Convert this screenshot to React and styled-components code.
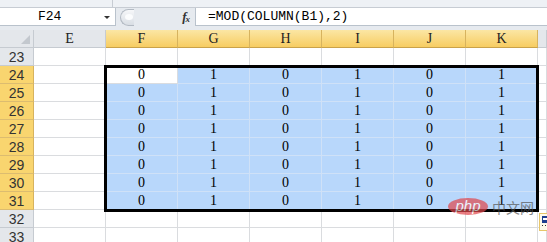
import React from 'react';
import styled, { createGlobalStyle } from 'styled-components';

const GlobalStyle = createGlobalStyle`
  html, body { margin: 0; padding: 0; background: #ffffff; }
  body { font-family: "Liberation Mono", monospace; }
`;

const COLS = ['E', 'F', 'G', 'H', 'I', 'J', 'K', ''];
const ROWS = [23, 24, 25, 26, 27, 28, 29, 30, 31, 32, 33];
const SEL_COLS = ['F', 'G', 'H', 'I', 'J', 'K'];
const isSelRow = r => r >= 24 && r <= 31;

const Window = styled.div`
  position: relative;
  width: 547px;
  height: 242px;
  overflow: hidden;
  background: #ffffff;
`;

const TopStrip = styled.div`
  display: flex;
  height: 7px;
  background: #eef1f5;
  border-bottom: 1px solid #c7ccd3;
`;

const StripCell = styled.div`
  width: ${p => p.w || 'auto'};
  flex: ${p => (p.w ? 'none' : 1)};
  border-right: ${p => (p.w ? '1px solid #c7ccd3' : 'none')};
`;

const FormulaBar = styled.div`
  display: flex;
  height: 22px;
  background: #e6eaef;
`;

const NameBox = styled.div`
  position: relative;
  width: 116px;
  height: 18px;
  box-sizing: border-box;
  background: #ffffff;
  border-right: 1px solid #b9c2cc;
  border-bottom: 1px solid #b9c2cc;
  font-size: 13px;
  line-height: 18px;
  padding-left: 38px;
  color: #000;
`;

const DropArrow = styled.span`
  position: absolute;
  right: 5px;
  top: 8px;
  width: 0;
  height: 0;
  border-left: 3px solid transparent;
  border-right: 3px solid transparent;
  border-top: 3px solid #333;
`;

const Tools = styled.div`
  width: 79px;
  height: 18px;
  display: flex;
  align-items: center;
  justify-content: space-between;
  padding: 0 4px;
  box-sizing: border-box;
`;

const Grip = styled.div`
  width: 14px;
  height: 17px;
  box-sizing: border-box;
  border: 1px solid #b3bac3;
  border-right: none;
  border-radius: 9px 0 0 9px;
  background: linear-gradient(#f6f7f9, #d9dee4);
  position: relative;
  &::after {
    content: '';
    position: absolute;
    left: 4px;
    top: 4px;
    width: 8px;
    height: 6px;
    border-radius: 50%;
    background: #fbfcfd;
  }
`;

const Fx = styled.span`
  font-family: "Liberation Serif", serif;
  font-style: italic;
  font-weight: bold;
  font-size: 13px;
  color: #333;
  letter-spacing: -1px;
  padding-right: 2px;
  sub {
    font-size: 9px;
    vertical-align: -1px;
  }
`;

const FormulaInput = styled.div`
  flex: 1;
  height: 18px;
  box-sizing: border-box;
  background: #ffffff;
  border-left: 1px solid #b9c2cc;
  border-bottom: 1px solid #b9c2cc;
  font-size: 13px;
  line-height: 18px;
  padding-left: 12px;
  white-space: nowrap;
`;

const Sheet = styled.div`
  display: grid;
  grid-template-columns: 34px repeat(7, 72px) 1fr;
  grid-auto-rows: 18px;
`;

const Corner = styled.div`
  position: relative;
  box-sizing: border-box;
  background: #e4e7eb;
  border-right: 1px solid #c6cbd1;
  border-bottom: 1px solid #c6cbd1;
  &::after {
    content: '';
    position: absolute;
    right: 3px;
    bottom: 3px;
    border-left: 9px solid transparent;
    border-bottom: 9px solid #c3c8ce;
  }
`;

const ColHead = styled.div`
  box-sizing: border-box;
  text-align: center;
  font-family: "Liberation Serif", serif;
  font-size: 14px;
  line-height: 18px;
  color: #222;
  background: ${p => (p.sel ? 'linear-gradient(#fbe6a4, #f7cd62)' : '#e4e7eb')};
  border-right: 1px solid ${p => (p.sel ? '#d7b35e' : '#c6cbd1')};
  border-bottom: 1px solid ${p => (p.sel ? '#c9a24a' : '#c6cbd1')};
`;

const RowHead = styled.div`
  box-sizing: border-box;
  text-align: center;
  font-family: "Liberation Sans", Arial, sans-serif;
  font-size: 14px;
  line-height: 18px;
  color: #333;
  background: ${p => (p.sel ? '#f9d56f' : '#e4e7eb')};
  border-right: 1px solid ${p => (p.sel ? '#d7b35e' : '#c6cbd1')};
  border-bottom: 1px solid ${p => (p.sel ? '#dcbc70' : '#c6cbd1')};
`;

const Cell = styled.div`
  box-sizing: border-box;
  text-align: center;
  font-family: "Liberation Serif", serif;
  font-size: 14px;
  line-height: 18px;
  color: #000;
  background: ${p => (p.sel ? '#b8d7fb' : '#ffffff')};
  border-right: 1px solid ${p => (p.sel ? '#cfe1f7' : '#dadcdf')};
  border-bottom: 1px solid ${p => (p.sel ? '#cfe1f7' : '#dadcdf')};
`;

const SelectionFrame = styled.div`
  position: absolute;
  left: 104px;
  top: 65px;
  width: 435px;
  height: 147px;
  box-sizing: border-box;
  border: 3px solid #000;
  pointer-events: none;
`;

const Watermark = styled.div`
  position: absolute;
  left: 448px;
  top: 198px;
  display: flex;
  align-items: center;
  gap: 4px;
  opacity: 0.7;
`;

const PhpBadge = styled.span`
  display: inline-block;
  width: 40px;
  height: 17px;
  border-radius: 50%;
  background: #e0474c;
  color: #fff;
  font-family: "Liberation Sans", Arial, sans-serif;
  font-style: italic;
  font-size: 15px;
  line-height: 16px;
  text-align: center;
`;

const CnMark = styled.span`
  font-family: "Noto Sans CJK SC", sans-serif;
  font-size: 14px;
  color: #555;
  line-height: 16px;
`;

const PasteIcon = styled.div`
  position: absolute;
  left: 539px;
  top: 213px;
  width: 14px;
  height: 18px;
  box-sizing: border-box;
  border: 1px solid #e7c66a;
  background: #fffbea;
  svg { display: block; margin: 2px 0 0 2px; }
`;

const App = () => {
  const cellValue = (col, row) => {
    if (!isSelRow(row)) return '';
    const idx = SEL_COLS.indexOf(col);
    if (idx < 0) return '';
    return idx % 2 === 0 ? '0' : '1';
  };

  return (
    <Window>
      <GlobalStyle />
      <TopStrip>
        <StripCell w="112px" />
        <StripCell />
      </TopStrip>
      <FormulaBar>
        <NameBox>
          F24
          <DropArrow />
        </NameBox>
        <Tools>
          <Grip />
          <Fx>
            f<sub>x</sub>
          </Fx>
        </Tools>
        <FormulaInput>=MOD(COLUMN(B1),2)</FormulaInput>
      </FormulaBar>
      <Sheet>
        <Corner />
        {COLS.map((c, i) => (
          <ColHead key={i} sel={SEL_COLS.includes(c)}>
            {c}
          </ColHead>
        ))}
        {ROWS.map(r => (
          <React.Fragment key={r}>
            <RowHead sel={isSelRow(r)}>{r}</RowHead>
            {COLS.map((c, i) => {
              const inSel = isSelRow(r) && SEL_COLS.includes(c);
              const active = r === 24 && c === 'F';
              return (
                <Cell key={i} sel={inSel && !active}>
                  {cellValue(c, r)}
                </Cell>
              );
            })}
          </React.Fragment>
        ))}
      </Sheet>
      <SelectionFrame />
      <Watermark>
        <PhpBadge>php</PhpBadge>
        <CnMark>中文网</CnMark>
      </Watermark>
      <PasteIcon>
        <svg width="9" height="12" viewBox="0 0 9 12">
          <rect x="0" y="0" width="9" height="7" fill="#1f3f8f" />
          <rect x="1" y="2" width="7" height="2" fill="#ffffff" />
          <rect x="0" y="9" width="1" height="1" fill="#333" />
          <rect x="3" y="9" width="1" height="1" fill="#333" />
          <rect x="6" y="9" width="1" height="1" fill="#333" />
        </svg>
      </PasteIcon>
    </Window>
  );
};

export default App;
